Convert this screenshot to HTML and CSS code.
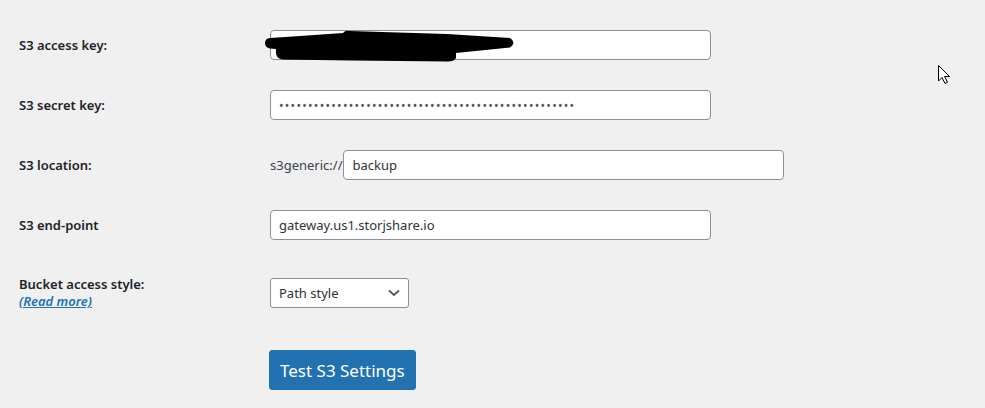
FILE: index.html
```html
<!DOCTYPE html>
<html lang="en">
<head>
<meta charset="utf-8">
<title>S3 settings</title>
<link rel="stylesheet" href="styles.css">
</head>
<body>
<div class="form">
  <div class="row">
    <label class="label" for="ak">S3 access key:</label>
    <div class="field"><input class="text" id="ak" type="text" value="AKIAXXXXXXXXXXXXXXXX"></div>
  </div>
  <div class="row">
    <label class="label" for="sk">S3 secret key:</label>
    <div class="field"><input class="text secret" id="sk" type="password" value="xxxxxxxxxxxxxxxxxxxxxxxxxxxxxxxxxxxxxxxxxxxxxxxxxxx"></div>
  </div>
  <div class="row">
    <label class="label" for="loc">S3 location:</label>
    <div class="field"><span class="prefix">s3generic://</span><input class="text" id="loc" type="text" value="backup"></div>
  </div>
  <div class="row">
    <label class="label" for="ep">S3 end-point</label>
    <div class="field"><input class="text" id="ep" type="text" value="gateway.us1.storjshare.io"></div>
  </div>
  <div class="row tall">
    <div class="label">
      <label for="bs">Bucket access style:</label><br>
      <a class="more" href="#">(Read more)</a>
    </div>
    <div class="field">
      <div class="select-wrap">
        <select id="bs" class="select">
          <option>Path style</option>
          <option>Virtual-host style</option>
        </select>
        <svg class="chev" width="12" height="8" viewBox="0 0 12 8"><path d="M1 1.5 L6 6 L11 1.5" fill="none" stroke="#50575e" stroke-width="1.8"/></svg>
      </div>
    </div>
  </div>
  <div class="row btn-row">
    <div></div>
    <div class="field"><button class="button" type="button">Test S3 Settings</button></div>
  </div>
</div>
<svg class="overlay" width="985" height="408" viewBox="0 0 985 408" aria-hidden="true">
  <path d="M270 38 L300 36 L343 33 Q345 30 350 31 L447 34 L510 38 Q517 42.5 510 47.5 L456 53 L456 58 Q454 61.5 448 61.5 L352 60.5 L283 59.5 Q276 58.5 276 53 L276 49 L270 48.5 Q265 47.5 265 43 Q265 38.5 270 38 Z" fill="#000"/>
  <path d="M938.5 65.5 L938.5 81 L942 77.5 L945 83.5 L947.5 82.3 L944.6 76.5 L949.5 76.5 Z" fill="#fff" stroke="#000" stroke-width="1" stroke-linejoin="miter"/>
</svg>
</body>
</html>
```

FILE: styles.css
```css
html, body {
  margin: 0;
  padding: 0;
}
body {
  background: #f0f0f1;
  color: #1d2327;
  font-family: "Segoe UI", "Noto Sans", "Open Sans", sans-serif;
  font-size: 14px;
  width: 985px;
  height: 408px;
  overflow: hidden;
  position: relative;
}
.form {
  padding: 15px 0 0 19px;
}
.row {
  display: grid;
  grid-template-columns: 251px 1fr;
  align-items: center;
  height: 60px;
}
.row.tall {
  height: 75px;
}
.row.btn-row {
  height: auto;
  padding-top: 20px;
}
.label {
  font-weight: 600;
  font-size: 13px;
  line-height: 1.3;
  color: #1d2327;
}
.field {
  display: flex;
  align-items: center;
}
.text {
  box-sizing: border-box;
  width: 441px;
  height: 30px;
  margin: 0;
  padding: 0 8px;
  border: 1px solid #8c8f94;
  border-radius: 4px;
  background: #fff;
  color: #2c3338;
  font-family: inherit;
  font-size: 13px;
  outline: none;
}
.secret {
  font-size: 12px;
  letter-spacing: 1.3px;
  color: #50575e;
}
.prefix {
  font-size: 13px;
  color: #3c434a;
  margin-right: 1px;
}
.more {
  color: #2271b1;
  font-style: italic;
  font-weight: 600;
  text-decoration: underline;
}
.select-wrap {
  position: relative;
  width: 139px;
  height: 30px;
}
.select {
  box-sizing: border-box;
  width: 139px;
  height: 30px;
  margin: 0;
  padding: 0 24px 0 8px;
  border: 1px solid #8c8f94;
  border-radius: 3px;
  background: #fff;
  color: #2c3338;
  font-family: inherit;
  font-size: 13px;
  appearance: none;
  -webkit-appearance: none;
  outline: none;
}
.chev {
  position: absolute;
  right: 9px;
  top: 11px;
  pointer-events: none;
}
.button {
  box-sizing: border-box;
  height: 40px;
  margin: 0 0 0 -1px;
  padding: 0 10px;
  border: 1px solid #2271b1;
  border-radius: 3px;
  background: #2271b1;
  color: #fff;
  font-family: inherit;
  font-size: 17px;
  cursor: pointer;
}
.overlay {
  position: absolute;
  left: 0;
  top: 0;
  pointer-events: none;
}
```
